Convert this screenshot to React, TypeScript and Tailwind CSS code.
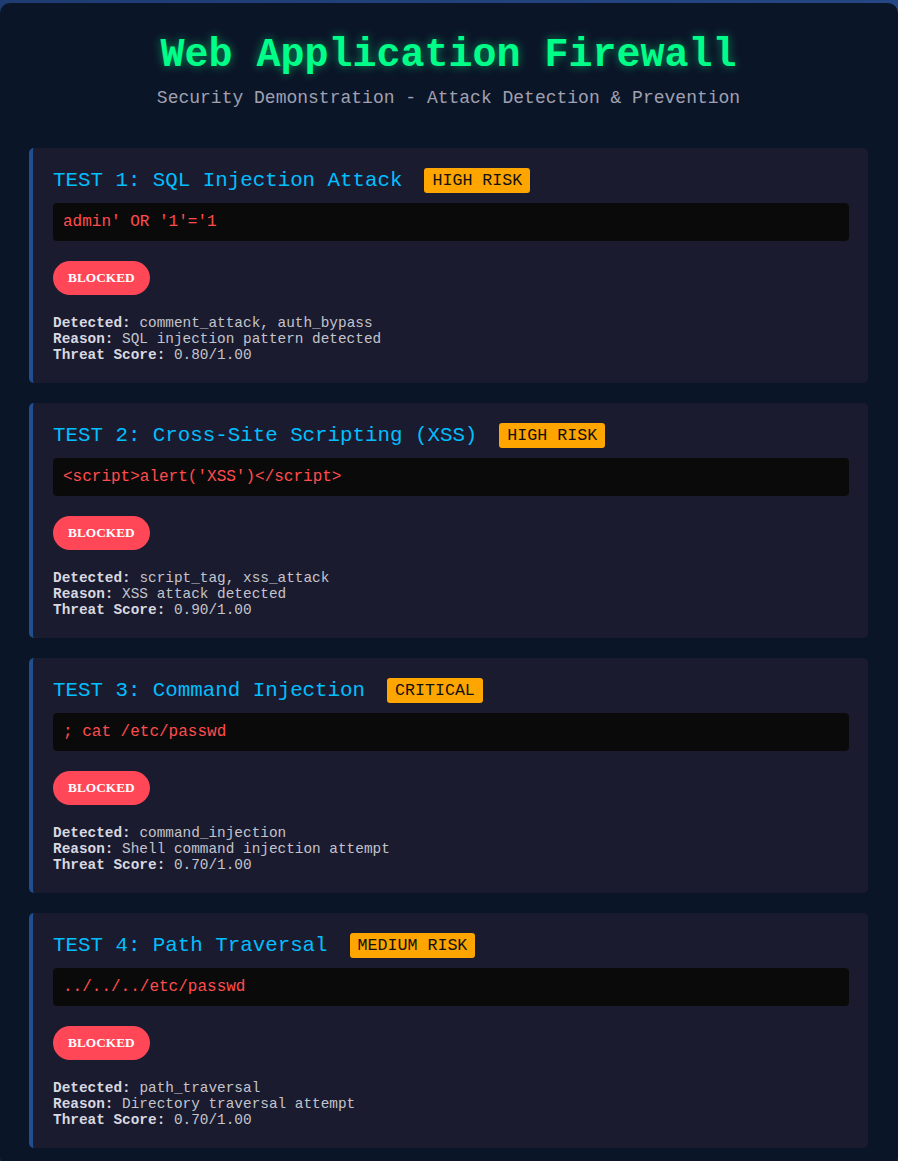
import React from "react";

interface Test {
  id: number;
  name: string;
  risk: string;
  payload: string;
  detected: string;
  reason: string;
  score: string;
}

const tests: Test[] = [
  {
    id: 1,
    name: "SQL Injection Attack",
    risk: "HIGH RISK",
    payload: "admin' OR '1'='1",
    detected: "comment_attack, auth_bypass",
    reason: "SQL injection pattern detected",
    score: "0.80/1.00",
  },
  {
    id: 2,
    name: "Cross-Site Scripting (XSS)",
    risk: "HIGH RISK",
    payload: "<script>alert('XSS')</script>",
    detected: "script_tag, xss_attack",
    reason: "XSS attack detected",
    score: "0.90/1.00",
  },
  {
    id: 3,
    name: "Command Injection",
    risk: "CRITICAL",
    payload: "; cat /etc/passwd",
    detected: "command_injection",
    reason: "Shell command injection attempt",
    score: "0.70/1.00",
  },
  {
    id: 4,
    name: "Path Traversal",
    risk: "MEDIUM RISK",
    payload: "../../../etc/passwd",
    detected: "path_traversal",
    reason: "Directory traversal attempt",
    score: "0.70/1.00",
  },
];

const mono = "font-['Courier_New','Courier','Nimbus_Mono_PS','FreeMono','Liberation_Mono',monospace]";

function TestCard({ test }: { test: Test }) {
  return (
    <div className="bg-[#1b1b2f] border-l-4 border-[#1f4f8e] rounded-[5px] p-5 pr-[19px] h-[235px]">
      <div className="flex items-center gap-[22px] h-[25px] mb-[10px]">
        <h3 className={`${mono} text-[20.8px] leading-[24px] text-[#00bfff] whitespace-pre`}>
          TEST {test.id}: {test.name}
        </h3>
        <span className={`${mono} bg-[#ffa500] text-[#111] text-[16.64px] leading-[19px] px-2 py-[3px] rounded-[3px]`}>
          {test.risk}
        </span>
      </div>

      <div className={`${mono} bg-[#0a0a0a] text-[#ff4d4d] text-[16px] leading-[18px] p-[10px] rounded-[4px]`}>
        {test.payload}
      </div>

      <div className="mt-5">
        <span className="inline-flex items-center h-[34px] px-[15px] rounded-full bg-[#ff4757] text-white font-bold text-[13.33px] font-['Liberation_Serif','Times_New_Roman',serif]">
          BLOCKED
        </span>
      </div>

      <div className={`${mono} mt-5 text-[14.4px] leading-[16px] text-[#c4c4cc]`}>
        <div>
          <b className="text-[#d8d8e0]">Detected:</b> {test.detected}
        </div>
        <div>
          <b className="text-[#d8d8e0]">Reason:</b> {test.reason}
        </div>
        <div>
          <b className="text-[#d8d8e0]">Threat Score:</b> {test.score}
        </div>
      </div>
    </div>
  );
}

export default function App() {
  return (
    <div className="min-h-screen bg-gradient-to-br from-[#1e3c72] to-[#2a5298] pt-[3px]">
      <div className="bg-[#0b1528] rounded-[10px] pt-[30px] pb-5 pl-[29px] pr-[30px] min-h-[1158px]">
        <h1
          className={`${mono} text-center font-bold text-[40px] leading-[45px] text-[#00ff88] [text-shadow:0_0_10px_rgba(0,255,136,0.5)]`}
        >
          Web Application Firewall
        </h1>
        <p className={`${mono} text-center text-[18px] leading-[20px] text-[#a0a0b0] mt-[10px] mb-10`}>
          Security Demonstration - Attack Detection &amp; Prevention
        </p>

        <div className="flex flex-col gap-5">
          {tests.map((t) => (
            <TestCard key={t.id} test={t} />
          ))}
        </div>
      </div>
    </div>
  );
}
